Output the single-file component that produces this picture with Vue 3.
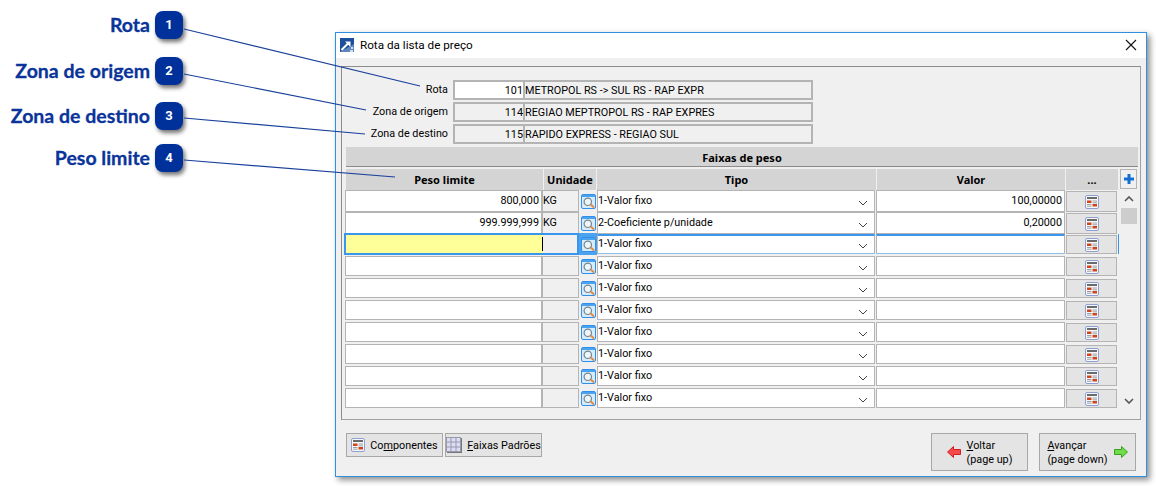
<script setup>
const callouts = [
  { n: 1, label: 'Rota' },
  { n: 2, label: 'Zona de origem' },
  { n: 3, label: 'Zona de destino' },
  { n: 4, label: 'Peso limite' }
]
const fields = [
  { label: 'Rota', code: '101', name: 'METROPOL RS -> SUL RS - RAP EXPR', live: true },
  { label: 'Zona de origem', code: '114', name: 'REGIAO MEPTROPOL RS - RAP EXPRES' },
  { label: 'Zona de destino', code: '115', name: 'RAPIDO EXPRESS - REGIAO SUL' }
]
const rows = [
  { peso: '800,000', un: 'KG', tipo: '1-Valor fixo', valor: '100,00000' },
  { peso: '999.999,999', un: 'KG', tipo: '2-Coeficiente p/unidade', valor: '0,20000' },
  { active: true },
  {}, {}, {}, {}, {}, {}, {}
]
</script>

<template>
  <div class="page">
    <div class="window">
      <header class="titlebar">
        <svg class="appicon" viewBox="0 0 14 14" width="14" height="14">
          <rect width="14" height="14" fill="#1c4f9c" />
          <path d="M0 14 L14 14 L14 6 Z" fill="#5f86bd" />
          <path d="M1.5 12 L8 5.5" stroke="#fff" stroke-width="2" fill="none" />
          <path d="M5 3.5 H10.5 V9 Z" fill="#fff" />
          <path d="M10 12 h3 v2 h-3z M11 9 h2 v2 h-2z" fill="#cfdcf0" />
        </svg>
        <span class="title">Rota da lista de preço</span>
        <svg class="close" viewBox="0 0 12 12" width="12" height="12">
          <path d="M1 1 L11 11 M11 1 L1 11" stroke="#111" stroke-width="1.1" fill="none" />
        </svg>
      </header>

      <div class="body">
        <section class="panel">
          <div class="fields">
            <div v-for="f in fields" :key="f.label" class="field">
              <label class="flabel">{{ f.label }}</label>
              <span class="fcode" :class="{ live: f.live }">{{ f.code }}</span>
              <span class="fname">{{ f.name }}</span>
            </div>
          </div>

          <div class="band">Faixas de peso</div>

          <div class="grid-row heads">
            <div class="head">Peso limite</div>
            <div class="head">Unidade</div>
            <div class="head">Tipo</div>
            <div class="head">Valor</div>
            <div class="head">...</div>
            <div class="plus">
              <svg viewBox="0 0 12 12" width="12" height="12">
                <path d="M6 1 V11 M1 6 H11" stroke="#1470d0" stroke-width="3" fill="none" />
              </svg>
            </div>
          </div>

          <div class="table">
            <div class="rows">
              <div v-for="(r, i) in rows" :key="i" class="row" :class="{ active: r.active }">
                <div class="cell peso">{{ r.peso }}<i v-if="r.active" class="caret"></i></div>
                <div class="cell unit">{{ r.un }}</div>
                <div class="lookup">
                  <svg viewBox="0 0 15 15" width="15" height="15">
                    <rect x="0.5" y="0.5" width="14" height="14" rx="1.5" fill="#d8ebfb" stroke="#2f8fea" />
                    <rect x="1" y="1" width="13" height="2" fill="#4ba3f0" />
                    <circle cx="6.8" cy="7.8" r="3.7" fill="#eef5fa" stroke="#71868f" stroke-width="1.2" />
                    <path d="M9.8 10.6 L13 13.6" stroke="#e58a3a" stroke-width="2" />
                  </svg>
                </div>
                <div class="cell tipo">
                  <span>{{ r.tipo || '1-Valor fixo' }}</span>
                  <svg viewBox="0 0 10 6" width="10" height="6">
                    <path d="M1 1 L5 5 L9 1" stroke="#444" stroke-width="1" fill="none" />
                  </svg>
                </div>
                <div class="cell valor">{{ r.valor }}</div>
                <div class="more">
                  <svg viewBox="0 0 14 14" width="14" height="14">
                    <rect x="0.5" y="0.5" width="13" height="13" rx="1.5" fill="#f6f8fd" stroke="#8ea0d2" />
                    <rect x="2" y="2" width="10" height="2" fill="#6a6a6a" />
                    <rect x="2" y="5.5" width="4.5" height="2.5" fill="#cf4418" />
                    <rect x="7.5" y="9" width="4.5" height="2.5" fill="#cf4418" />
                    <path d="M7.5 6 H12 M7.5 7.8 H12 M2 9.5 H6.5 M2 11.2 H6.5" stroke="#888" stroke-width="0.8" />
                  </svg>
                </div>
              </div>
            </div>
            <div class="scroll">
              <svg viewBox="0 0 10 6" width="10" height="6" class="chev up">
                <path d="M1 5 L5 1 L9 5" stroke="#555" stroke-width="1.6" fill="none" />
              </svg>
              <div class="thumb"></div>
              <svg viewBox="0 0 10 6" width="10" height="6" class="chev down">
                <path d="M1 1 L5 5 L9 1" stroke="#555" stroke-width="1.6" fill="none" />
              </svg>
            </div>
          </div>
        </section>

        <footer class="actions">
          <button class="btn small">
            <svg viewBox="0 0 14 14" width="14" height="14">
              <rect x="0.5" y="0.5" width="13" height="13" rx="1.5" fill="#f6f8fd" stroke="#8ea0d2" />
              <rect x="2" y="2" width="10" height="2" fill="#6a6a6a" />
              <rect x="2" y="5.5" width="4.5" height="2.5" fill="#cf4418" />
              <rect x="7.5" y="9" width="4.5" height="2.5" fill="#cf4418" />
              <path d="M7.5 6 H12 M7.5 7.8 H12 M2 9.5 H6.5 M2 11.2 H6.5" stroke="#888" stroke-width="0.8" />
            </svg>
            <span>Co<u>m</u>ponentes</span>
          </button>
          <button class="btn small">
            <svg viewBox="0 0 16 16" width="16" height="16">
              <rect x="1" y="1" width="15" height="15" fill="#777" />
              <rect x="0.5" y="0.5" width="14" height="14" fill="#dcdcf6" stroke="#9a9aa8" />
              <path d="M5 1 V14 M10 1 V14 M1 5 H14 M1 10 H14" stroke="#9a9aa8" />
            </svg>
            <span><u>F</u>aixas Padrões</span>
          </button>
          <div class="spacer"></div>
          <button class="btn nav">
            <svg viewBox="0 0 14 12" width="14" height="12">
              <path d="M0.5 6 L6.5 0.5 V3.5 H13.5 V8.5 H6.5 V11.5 Z" fill="#f4484a" stroke="#d42020" />
            </svg>
            <span class="navtext"><span><u>V</u>oltar</span><span>(page up)</span></span>
          </button>
          <button class="btn nav">
            <span class="navtext"><span><u>A</u>vançar</span><span>(page down)</span></span>
            <svg viewBox="0 0 14 12" width="14" height="12">
              <path d="M13.5 6 L7.5 0.5 V3.5 H0.5 V8.5 H7.5 V11.5 Z" fill="#6fdc48" stroke="#3aa020" />
            </svg>
          </button>
        </footer>
      </div>
    </div>

    <div class="callouts">
      <div v-for="c in callouts" :key="c.n" class="callout" :class="'c' + c.n">
        <span class="clabel">{{ c.label }}</span>
        <span class="badge">{{ c.n }}</span>
      </div>
    </div>
    <svg class="leaders" viewBox="0 0 1156 486" width="1156" height="486">
      <path d="M184 29 L420 86 M184 74 L366 110 M184 118 L365 134 M184 160 L395 177" stroke="#1a419c" stroke-width="1.2" fill="none" />
    </svg>
  </div>
</template>

<style scoped>
.page {
  position: relative;
  width: 1156px;
  height: 486px;
  overflow: hidden;
  background: #fff;
  padding: 32px 0 0 335px;
  box-sizing: border-box;
  font-family: Roboto, "Noto Sans", sans-serif;
  font-size: 10.8px;
  color: #000;
}
.window {
  width: 812px;
  height: 445px;
  box-sizing: border-box;
  border: 1px solid #2f8fe0;
  background: #f0f0f0;
  box-shadow: 3px 3px 6px rgba(0, 0, 0, 0.45);
  display: flex;
  flex-direction: column;
}
.titlebar {
  height: 25px;
  flex: none;
  box-sizing: border-box;
  background: #fff;
  display: flex;
  align-items: center;
  padding: 0 9px 2px 4px;
}
.appicon { margin-right: 6px; }
.title { font-size: 11.7px; flex: 1; }
.close { margin-right: 0; }

.body {
  flex: 1;
  padding: 8px 5px 0 5px;
  display: flex;
  flex-direction: column;
}
.panel {
  height: 354px;
  flex: none;
  box-sizing: border-box;
  border: 1px solid #a0a0a0;
  border-top-color: #8c8c8c;
  border-left-color: #8c8c8c;
  padding: 13px 2px 0 3px;
}
.fields { display: flex; flex-direction: column; gap: 2px; }
.field { display: flex; height: 20px; line-height: 20px; }
.flabel { width: 99px; text-align: right; padding-right: 5px; flex: none; margin-left: 4px; }
.fcode, .fname {
  box-sizing: border-box;
  border: 2px solid #b4b4b4;
  background: #f0f0f0;
  line-height: 18px;
  white-space: nowrap;
}
.fcode { width: 72px; text-align: right; padding-right: 0; border-right-width: 2px; }
.fcode.live { background: #fff; }
.fname { width: 288px; border-left: 0; padding-left: 0; }

.band {
  margin: 3px 0 0 1px;
  width: 792px;
  height: 20px;
  box-sizing: border-box;
  background: #d4d4d4;
  border-bottom: 1px solid #8a8a8a;
  font-family: "Noto Sans", sans-serif;
  font-size: 11px;
  font-weight: 700;
  text-align: center;
  line-height: 21px;
}
.heads {
  margin: 2px 0 0 1px;
  display: grid;
  grid-template-columns: 197px 52px 279px 188px 52px 18px;
  column-gap: 1px;
  height: 20px;
}
.head {
  background: #d4d4d4;
  font-family: "Noto Sans", sans-serif;
  font-size: 11px;
  font-weight: 700;
  text-align: center;
  line-height: 21px;
}
.plus {
  box-sizing: border-box;
  margin-left: 1px;
  width: 17px;
  height: 20px;
  border: 1px solid #b4b4b4;
  display: flex;
  align-items: center;
  justify-content: center;
}

.table { display: flex; margin-top: 1px; }
.rows { display: flex; flex-direction: column; gap: 2px; width: 773px; }
.row {
  display: grid;
  grid-template-columns: 198px 36px 18px 278px 190px 53px;
  height: 20px;
}
.cell {
  box-sizing: border-box;
  border: 1px solid #b4b4b4;
  background: #fff;
  line-height: 20px;
  white-space: nowrap;
}
.peso { text-align: right; padding-right: 2px; border-width: 1px 2px 1px 1px; position: relative; }
.unit { background: #f0f0f0; border-left: 0; border-width: 1px 1px 1px 0; }
.lookup { display: flex; align-items: center; justify-content: center; padding-left: 1px; }
.tipo {
  display: flex;
  align-items: center;
  justify-content: space-between;
  padding-right: 6px;
  line-height: 16px;
}
.tipo span { margin-top: -1px; }
.tipo svg { margin-top: 3px; }
.valor { text-align: right; padding-right: 2px; margin-left: 1px; }
.more {
  box-sizing: border-box;
  border: 1px solid #b4b4b4;
  background: #e4e4e4;
  display: flex;
  align-items: center;
  justify-content: center;
  margin: 1px 1px 0 1px;
}
.row.active {
  box-shadow: 1px 0 0 #3a96ec;
}
.row.active .peso {
  background: #ffff99;
  border: 2px solid #3a96ec;
  margin: -1px 0 -1px -1px;
  border-right: 0;
}
.row.active .unit {
  border: 2px solid #3a96ec;
  border-left: 0;
  margin: -1px 0;
}
.row.active .lookup { background: #4ba3f0; margin: -1px 0; }
.row.active .tipo, .row.active .valor { border-top: 2px solid #3a96ec; border-bottom: 1px solid #8fc0ec; }
.caret {
  position: absolute;
  right: 0;
  top: 2px;
  width: 1px;
  height: 14px;
  background: #000;
}

.scroll {
  width: 17px;
  margin-left: 2px;
  height: 218px;
  background: #f0f0f0;
  display: flex;
  flex-direction: column;
  align-items: center;
}
.chev.up { margin-top: 6px; }
.thumb { width: 16px; height: 16px; background: #cdcdcd; margin-top: 6px; }
.chev.down { margin-top: auto; margin-bottom: 4px; }

.actions {
  display: flex;
  align-items: flex-start;
  padding: 13px 5px 0 5px;
}
.spacer { flex: 1; }
.btn {
  box-sizing: border-box;
  border: 1px solid #a8a8a8;
  font: inherit;
  color: inherit;
  padding: 0;
  display: flex;
  align-items: center;
  justify-content: center;
  white-space: nowrap;
}
.btn.small {
  width: 97px;
  height: 24px;
  background: #e4e4e4;
  gap: 5px;
  margin-right: 2px;
}
.btn.nav {
  width: 97px;
  height: 38px;
  background: #e4e4e4;
  gap: 6px;
  margin-left: 11px;
}
.navtext { display: flex; flex-direction: column; text-align: left; line-height: 14px; padding-top: 2px; }

.callouts {
  position: absolute;
  inset: 0;
  pointer-events: none;
}
.callout {
  position: absolute;
  left: 0;
  width: 183px;
  display: flex;
  align-items: center;
  justify-content: flex-end;
  gap: 5px;
}
.c1 { top: 11px; }
.c2 { top: 57px; }
.c3 { top: 102px; }
.c4 { top: 144px; }
.clabel {
  font-family: Lato, "Noto Sans", sans-serif;
  font-weight: 700;
  font-size: 19.5px;
  color: #0a349a;
  -webkit-text-stroke: 0.3px #0a349a;
  margin-top: -1px;
}
.badge {
  width: 28px;
  height: 28px;
  border-radius: 8px;
  background: #00309a;
  color: #fff;
  font-size: 13px;
  font-weight: 700;
  text-align: center;
  line-height: 28px;
  box-shadow: 2px 3px 4px rgba(0, 0, 0, 0.55);
}
.leaders {
  position: absolute;
  left: 0;
  top: 0;
  pointer-events: none;
}
</style>
